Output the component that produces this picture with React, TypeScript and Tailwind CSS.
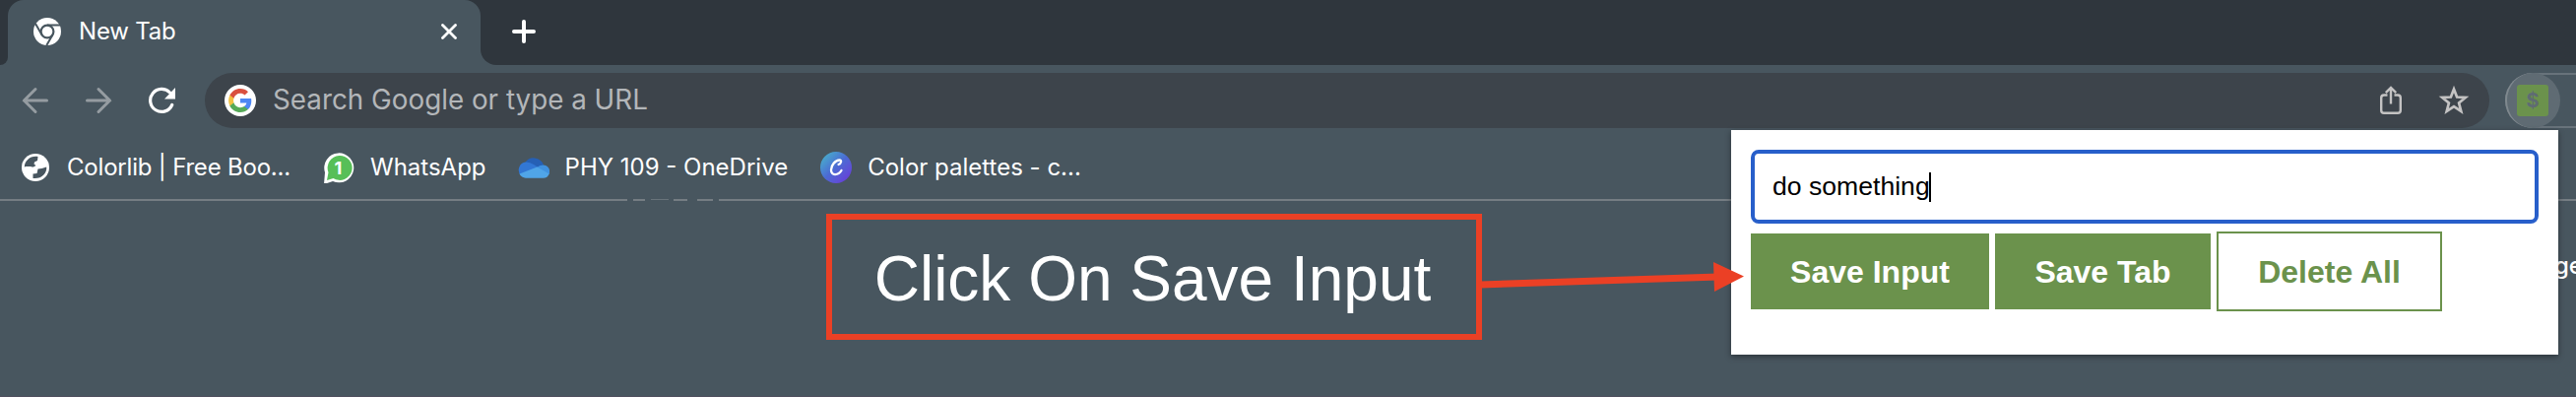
import React from "react";

function Bookmark({ icon, label, className }: { icon: React.ReactNode; label: string; className: string }) {
  return (
    <div className={"flex h-full items-center " + className}>
      {icon}
      <span className="whitespace-nowrap">{label}</span>
    </div>
  );
}

const ChromeIcon = () => (
  <svg className="h-7 w-7 shrink-0" viewBox="0 0 28 28">
    <circle cx="14" cy="14" r="14" fill="#fff" />
    <circle cx="14" cy="14" r="6.4" fill="none" stroke="#48565f" strokeWidth="2.2" />
    <path d="M14 7.6H27M8.500 17.200L2 6M19.500 17.200L13.300 28" stroke="#48565f" strokeWidth="2" />
  </svg>
);

const GoogleIcon = () => (
  <svg className="h-8 w-8 shrink-0" viewBox="0 0 32 32">
    <circle cx="16" cy="16" r="16" fill="#fff" />
    <g transform="translate(4 4)">
      <path fill="#4d87f4" d="M23.3 12.2c0-.9-.1-1.5-.2-2.2H12v4.5h6.4c-.3 1.5-1.1 2.700-2.400 3.600v3h3.900c2.300-2.100 3.400-5.200 3.400-8.900z" />
      <path fill="#56aa58" d="M12 24c3.200 0 5.900-1 7.900-2.900L16 18.100c-1.100.7-2.400 1.100-4 1.100-3.100 0-5.700-2.100-6.600-4.900h-4v3.100C3.400 21.300 7.400 24 12 24z" />
      <path fill="#f2c043" d="M5.400 14.300c-.5-1.500-.5-3.100 0-4.600V6.600h-4c-1.700 3.400-1.700 7.400 0 10.800z" />
      <path fill="#d9503f" d="M12 4.800c1.800 0 3.300.6 4.600 1.800L20 3.200C17.900 1.200 15.200 0 12 0 7.400 0 3.400 2.700 1.400 6.600l4 3.100C6.300 6.900 8.900 4.800 12 4.800z" />
    </g>
  </svg>
);

export default function App() {
  return (
    <div className="relative flex h-[403px] w-[2616px] flex-col overflow-hidden bg-[#48565f] font-['Inter',sans-serif] text-white">
      <div className="flex h-[66px] shrink-0 bg-[#2f363d]">
        <div className="h-full w-2 bg-[#48565f]">
          <div className="h-full w-2 rounded-br-[14px] bg-[#2f363d]" />
        </div>
        <div className="flex h-full w-[480px] items-center rounded-t-2xl bg-[#48565f] pr-6 pb-0.5 pl-[26px]">
          <ChromeIcon />
          <span className="ml-[18px] text-[24px] tracking-[-0.2px]">New Tab</span>
          <svg className="ml-auto h-4 w-4" viewBox="0 0 16 16">
            <path d="M1.500 1.500l13 13m0-13l-13 13" stroke="#fff" strokeWidth="2.800" strokeLinecap="round" />
          </svg>
        </div>
        <div className="h-full w-4 bg-[#48565f]">
          <div className="h-full w-4 rounded-bl-2xl bg-[#2f363d]" />
        </div>
        <svg className="mt-5 ml-4 h-6 w-6" viewBox="0 0 24 24">
          <path d="M12 2v20M2 12h20" stroke="#fff" strokeWidth="4" strokeLinecap="round" />
        </svg>
      </div>

      <div className="flex h-[72px] shrink-0 items-center">
        <svg className="ml-[22px] h-7 w-7 shrink-0" viewBox="0 0 28 28" fill="none" stroke="#959ca1" strokeWidth="3" strokeLinecap="round">
          <path d="M25.500 14H2.500M14 2.500L2.500 14 14 25.500" />
        </svg>
        <svg className="ml-9 h-7 w-7 shrink-0" viewBox="0 0 28 28" fill="none" stroke="#959ca1" strokeWidth="3" strokeLinecap="round">
          <path d="M2.500 14H25.500M14 2.500L25.500 14 14 25.500" />
        </svg>
        <svg className="ml-9 h-7 w-7 shrink-0" viewBox="0 0 28 28">
          <path d="M22.500 6A11.500 11.500 0 1 0 24.700 18.500" fill="none" stroke="#fff" strokeWidth="3.200" strokeLinecap="round" />
          <path d="M28 1v11.500H17z" fill="#fff" />
        </svg>
        <div className="ml-[30px] flex h-14 w-[2320px] shrink-0 items-center rounded-full bg-[#3d444b] pr-5 pl-5">
          <GoogleIcon />
          <span className="ml-[17px] text-[27.800px] text-[#b3b6b9]">Search Google or type a URL</span>
          <svg className="ml-auto h-8 w-8" viewBox="0 0 32 32" fill="none" stroke="#c4c3c3" strokeWidth="2.400">
            <path d="M12.500 10.500H9a2.800 2.800 0 0 0-2.800 2.800V26a2.800 2.800 0 0 0 2.800 2.800H23A2.800 2.800 0 0 0 25.800 26V13.300A2.800 2.800 0 0 0 23 10.500H19.500" />
            <path d="M16 19.500V3.500M10.800 8.200L16 3l5.200 5.200" />
          </svg>
          <svg className="ml-8 h-8 w-8" viewBox="0 0 32 32" fill="none" stroke="#c4c3c3" strokeWidth="2.700">
            <path d="M16 4.500l3.100 8 8.700.5-6.700 5.500 2.200 8.400L16 22.200l-7.300 4.700 2.200-8.400-6.700-5.500 8.700-.5z" />
          </svg>
        </div>
        <div className="ml-4 flex h-14 w-[72px] shrink-0 rounded-l-full border-2 border-r-0 border-[#68737b]">
          <div className="-mt-0.5 -ml-0.5 flex h-14 w-14 shrink-0 items-center justify-center rounded-full border-l-2 border-[#7f888e] bg-[#5f6b73]">
            <div className="-ml-0.5 flex h-8 w-8 items-center justify-center rounded-[3px] bg-[#6b924c] text-[20px] font-bold text-[#5f6b73]">$</div>
          </div>
        </div>
      </div>

      <div className="flex h-16 shrink-0 text-[24px] leading-[64px]">
        <Bookmark
          className="ml-[22px] gap-[18px] tracking-[-0.2px]"
          label="Colorlib | Free Boo..."
          icon={
            <svg className="h-7 w-7" viewBox="0 0 28 28">
              <circle cx="14" cy="14" r="14" fill="#fff" />
              <path d="M16.500 3C9 1.800 3 7 2.800 13.500H12l2.500-1.500-2-1.500.5-2 3-1.500z" fill="#48565f" />
              <path d="M11.500 25v-4.500l4-.5 1-4.500 4-.5 4.700-1.500C26 20 20 26 11.500 25z" fill="#48565f" />
              <path d="M3 13h6l4 2.500-.5 4H10z" fill="#fff" />
            </svg>
          }
        />
        <Bookmark
          className="ml-[33px] gap-4"
          label="WhatsApp"
          icon={
            <svg className="h-8 w-8" viewBox="0 0 32 32">
              <path d="M1 33l1-12A15 15 0 1 1 10 30z" fill="#fff" />
              <path d="M4 29l1.500-8A12.500 12.500 0 1 1 10.500 27z" fill="#57bf58" />
              <text x="15.500" y="22.500" textAnchor="middle" fontSize="18" fontWeight="700" fill="#fff">1</text>
            </svg>
          }
        />
        <Bookmark
          className="ml-[32px] gap-4"
          label="PHY 109 - OneDrive"
          icon={
            <svg className="h-[21px] w-8" viewBox="0 0 32 21">
              <path d="M7 5.500A10.500 10.500 0 0 1 26 7.500L18 13z" fill="#2660b5" />
              <path d="M8 4.500q4.500 0 8 2.500l6 4L3 18A8 8 0 0 1 8 4.500z" fill="#3277d4" />
              <path d="M18.500 10.500Q22 7.500 25.500 7.500A6.600 6.600 0 0 1 31.500 17z" fill="#4092e0" />
              <path d="M1.500 16.500L19.500 9.500 31.700 16.500A6.500 6.500 0 0 1 25.500 20.700H8A8 8 0 0 1 1.500 16.500z" fill="#50a5e8" />
            </svg>
          }
        />
        <Bookmark
          className="ml-[33px] gap-4"
          label="Color palettes - c..."
          icon={
            <span className="flex h-8 w-8 items-center justify-center rounded-full bg-linear-to-br from-[#48bcc8] via-[#4b69d3] to-[#6b2bda]">
              <svg className="h-8 w-8" viewBox="0 0 32 32">
                <path d="M18.500 13c3-1 3.500-4.500 1-4.500-4 0-8.500 5-8.500 10 0 6.500 7.500 5.500 10.500.5" fill="none" stroke="#fff" strokeWidth="2.300" strokeLinecap="round" />
              </svg>
            </span>
          }
        />
      </div>

      <div className="flex h-0.5 shrink-0">
        <div className="w-[637px] bg-[#757d83]" />
        <div className="ml-1.5 w-3 bg-[#757d83]" />
        <div className="ml-1.5 h-px w-[18px] bg-[#68737a]" />
        <div className="ml-[5px] w-3.5 bg-[#757d83]" />
        <div className="ml-2.5 w-4 bg-[#757d83]" />
        <div className="ml-1.5 flex-1 bg-[#757d83]" />
      </div>
      <div className="flex flex-1 items-start">
        <div className="mt-[13px] ml-[839px] flex h-32 w-[666px] items-center justify-center border-[6px] border-[#eb4025] pt-1 pr-[3px] font-['Liberation_Sans',sans-serif] text-[64px]">
          Click On Save Input
        </div>
      </div>
      <div className="h-px shrink-0 bg-[#50505f]" />

      <div className="absolute top-[252px] left-[2594px] text-[24px] font-medium">ge</div>
      <div className="absolute top-[132px] left-[1758px] flex h-[228px] w-[840px] flex-col bg-white p-5 font-['Liberation_Sans',sans-serif] shadow-[0_2px_6px_0_#00000066]">
        <div className="flex h-[75px] items-center rounded-lg border-4 border-[#285fca] pl-[18px] text-[26.600px] text-black">
          <span>do something</span>
          <span className="-ml-px h-[30px] w-0.5 bg-black" />
        </div>
        <div className="mt-2 flex h-[81px] items-center gap-1.5 text-[32px] font-bold">
          <div className="flex h-[77px] w-[242px] items-center justify-center bg-[#6b924c]">Save Input</div>
          <div className="flex h-[77px] w-[219px] items-center justify-center bg-[#6b924c]">Save Tab</div>
          <div className="flex h-[81px] w-[229px] items-center justify-center border-2 border-[#6b924c] text-[#6b924c]">Delete All</div>
        </div>
      </div>
      <svg className="absolute top-[260px] left-[1500px] h-10 w-[280px]" viewBox="0 0 280 40">
        <path d="M3 29L245 21" stroke="#eb4025" strokeWidth="7" />
        <path d="M240 6l31 14.500L241 36z" fill="#eb4025" />
      </svg>
    </div>
  );
}
